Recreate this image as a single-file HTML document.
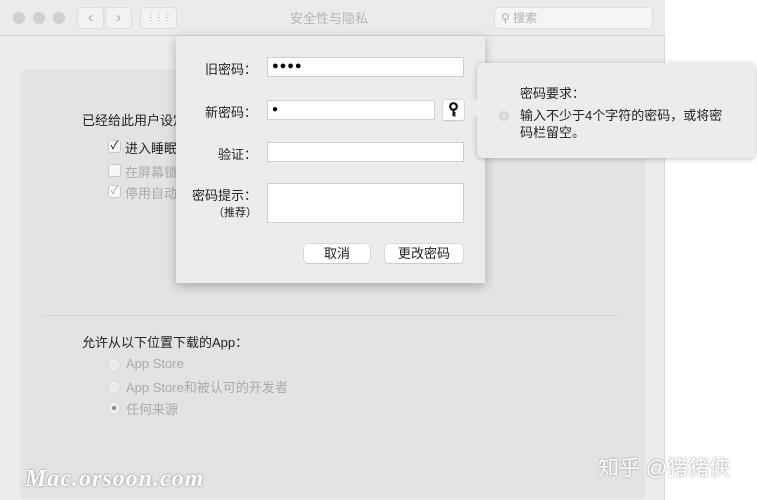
<!DOCTYPE html>
<html><head><meta charset="utf-8"><style>
*{margin:0;padding:0;box-sizing:border-box}
body{width:757px;height:500px;overflow:hidden;background:#fff;font-family:"Liberation Sans","Noto Sans CJK SC",sans-serif;position:relative}
.a{position:absolute}
.win{left:0;top:0;width:665px;height:500px;background:#ececec;border-right:1px solid #d8d8d8}
.title{left:0;top:0;width:665px;height:36px;background:#ebebeb;border-bottom:1px solid #d2d2d2}
.dot{width:12px;height:12px;border-radius:50%;background:#d0d0d0;top:12px}
.nb{top:7px;height:22px;border:1px solid #dcdcdc;border-radius:4px;background:#f2f2f2;color:#aaa;font-size:15px;text-align:center;line-height:19px}
.panel{left:20px;top:70px;width:625px;height:428px;background:#e3e3e3;border-radius:4px}
.t{font-size:13px;color:#222;white-space:nowrap}
.g{color:#aaa}
.cb{width:13px;height:13px;border:1px solid #c8c8c8;border-radius:3px;background:#f7f7f7;font-size:11px;line-height:11px;text-align:center}
.rd{width:14px;height:14px;border-radius:50%;background:#ececec;border:1px solid #d6d6d6}
.dlg{left:176px;top:36px;width:309px;height:247px;background:#ececec;box-shadow:0 3px 10px rgba(0,0,0,.25)}
.in{background:#fff;border:1px solid #cfcfcf}
.lb{font-size:13px;color:#222;text-align:right;width:80px;left:177px}
.btn{background:#fff;border-radius:4px;box-shadow:0 0 0 .5px #c4c4c4,0 1px 1px rgba(0,0,0,.15);font-size:13px;text-align:center;line-height:19px;color:#222;height:19px}
.pop{left:477px;top:63px;width:278px;height:95px;background:#ececec;border-radius:6px;box-shadow:0 1px 6px rgba(0,0,0,.25)}
</style></head><body>
<div class="a win"></div>
<div class="a title"></div>
<div class="a dot" style="left:13px"></div><div class="a dot" style="left:33px"></div><div class="a dot" style="left:53px"></div>
<div class="a nb" style="left:77px;width:27px">‹</div><div class="a nb" style="left:105px;width:27px">›</div>
<div class="a nb" style="left:140px;width:37px;font-size:9px;letter-spacing:-1px">⋮⋮⋮</div>
<div class="a t" style="left:290px;top:8px;color:#b5b5b5;font-size:13px">安全性与隐私</div>
<div class="a" style="left:494px;top:7px;width:159px;height:22px;background:#f5f5f5;border:1px solid #dedede;border-radius:5px;font-size:12px;color:#b0b0b0;padding-left:6px;line-height:20px">⚲ 搜索</div>
<div class="a panel"></div>
<div class="a t" style="left:82px;top:110px">已经给此用户设定</div>
<div class="a cb" style="left:108px;top:140px">✓</div><div class="a t" style="left:125px;top:138px">进入睡眠</div>
<div class="a cb" style="left:108px;top:164px"></div><div class="a t g" style="left:125px;top:162px">在屏幕锁</div>
<div class="a cb g" style="left:108px;top:185px">✓</div><div class="a t g" style="left:125px;top:183px">停用自动</div>
<div class="a" style="left:43px;top:315px;width:575px;height:1px;background:#d0d0d0"></div>
<div class="a t" style="left:82px;top:332px">允许从以下位置下载的App：</div>
<div class="a rd" style="left:107px;top:358px"></div><div class="a t g" style="left:126px;top:356px">App Store</div>
<div class="a rd" style="left:107px;top:380px"></div><div class="a t g" style="left:126px;top:377px">App Store和被认可的开发者</div>
<div class="a rd" style="left:107px;top:401px"><div class="a" style="left:4px;top:4px;width:4px;height:4px;border-radius:50%;background:#888"></div></div><div class="a t g" style="left:126px;top:399px">任何来源</div>
<div class="a" style="left:25px;top:466px;font-family:'Liberation Serif',serif;font-style:italic;font-weight:bold;font-size:24px;color:#fff;text-shadow:0 0 2px #777;letter-spacing:1px">Mac.orsoon.com</div>
<div class="a" style="left:598px;top:452px;font-size:21px;color:#fff;text-shadow:0 0 2px #888">知乎 @猪猪侠</div>
<div class="a dlg"></div>
<div class="a lb" style="top:59px">旧密码：</div>
<div class="a in" style="left:267px;top:57px;width:197px;height:20px;font-size:11px;padding-left:4px;line-height:17px;letter-spacing:1px">●●●●</div>
<div class="a lb" style="top:102px">新密码：</div>
<div class="a in" style="left:267px;top:100px;width:168px;height:20px;font-size:10px;padding-left:4px;line-height:17px">●</div>
<div class="a btn" style="left:443px;top:100px;width:21px;height:20px;border-radius:2px"><svg width="21" height="20" viewBox="0 0 21 20"><circle cx="10.5" cy="6.5" r="3.3" fill="none" stroke="#111" stroke-width="2.2"/><path d="M10.5 9v7M10.5 13h2M10.5 15.5h2" stroke="#111" stroke-width="2"/></svg></div>
<div class="a lb" style="top:144px">验证：</div>
<div class="a in" style="left:267px;top:142px;width:197px;height:20px"></div>
<div class="a lb" style="top:185px">密码提示：</div>
<div class="a lb" style="top:204px;font-size:11px">（推荐）</div>
<div class="a in" style="left:267px;top:183px;width:197px;height:40px"></div>
<div class="a btn" style="left:304px;top:244px;width:66px">取消</div>
<div class="a btn" style="left:385px;top:244px;width:78px">更改密码</div>
<div class="a pop"></div>
<div class="a" style="left:470px;top:101px;width:14px;height:14px;background:#ececec;transform:rotate(45deg)"></div>
<div class="a t" style="left:520px;top:83px">密码要求：</div>
<div class="a" style="left:499px;top:111px;width:10px;height:10px;border-radius:50%;background:#ddd;border:1px solid #d0d0d0"></div>
<div class="a t" style="left:520px;top:107px;line-height:17px;width:212px;white-space:normal">输入不少于4个字符的密码，或将密码栏留空。</div>
</body></html>
